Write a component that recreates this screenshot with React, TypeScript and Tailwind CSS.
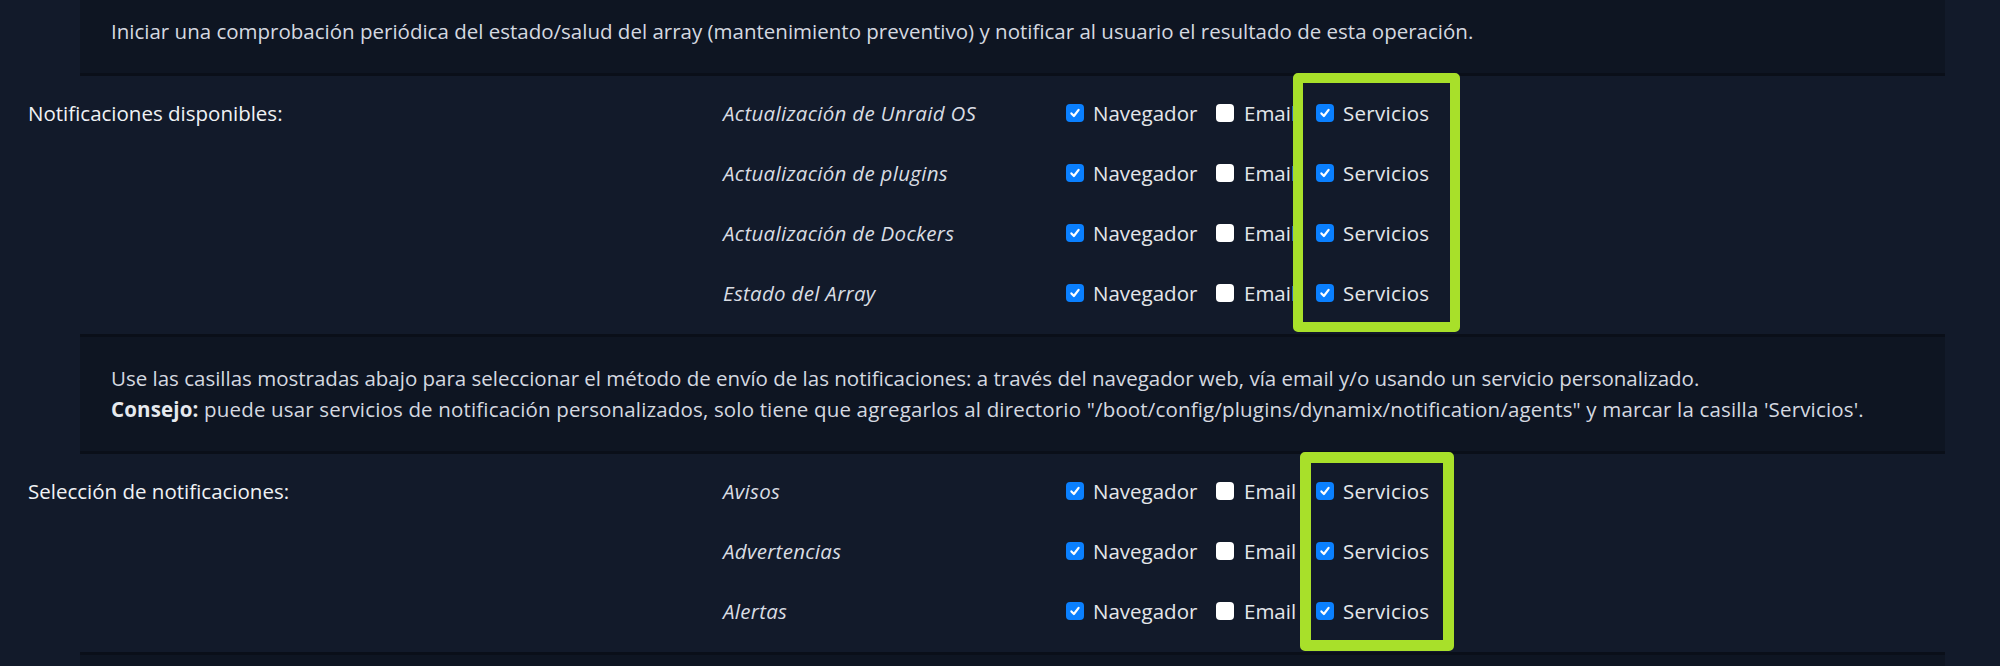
import React from "react";

const AVAILABLE = [
  "Actualización de Unraid OS",
  "Actualización de plugins",
  "Actualización de Dockers",
  "Estado del Array",
];

const SELECTION = ["Avisos", "Advertencias", "Alertas"];

function Check({ checked = false }: { checked?: boolean }) {
  if (!checked) {
    return <span className="w-[18px] h-[18px] rounded-[4px] bg-white shrink-0" />;
  }
  return (
    <span className="w-[18px] h-[18px] rounded-[4px] bg-[#0a80ff] flex items-center justify-center shrink-0">
      <svg viewBox="0 0 12 12" className="w-[12px] h-[12px]">
        <path
          d="M2.4 6.4 L4.9 9 L9.6 2.8"
          stroke="white"
          strokeWidth="2.2"
          fill="none"
          strokeLinecap="round"
          strokeLinejoin="round"
        />
      </svg>
    </span>
  );
}

function Options() {
  return (
    <div className="flex items-center text-[#e4e7eb]">
      <label className="w-[150px] flex items-center gap-[9px]">
        <Check checked />
        Navegador
      </label>
      <label className="w-[100px] flex items-center gap-[10px]">
        <Check />
        Email
      </label>
      <label className="flex items-center gap-[9px] tracking-[0.3px]">
        <Check checked />
        Servicios
      </label>
    </div>
  );
}

function Panel({ children, className = "" }: { children?: React.ReactNode; className?: string }) {
  return (
    <div
      className={`ml-[80px] mr-[55px] bg-[#0e1522] border-b-[3px] border-[#0a0f19] pl-[31px] text-[#d5d9e0] leading-[31px] ${className}`}
    >
      {children}
    </div>
  );
}

// bloque de etiqueta + filas de casillas, el recuadro verde va encima
function Section({
  title,
  items,
  box,
}: {
  title: string;
  items: string[];
  box: string;
}) {
  return (
    <div className="relative flex pt-[7px] pb-[11px]">
      <div className="w-[723px] pl-[28px] h-[60px] flex items-center text-[#f0f2f5]">{title}</div>
      <div className="flex flex-col">
        {items.map((it) => (
          <div key={it} className="h-[60px] flex items-center">
            <span className="w-[343px] italic tracking-[0.3px] text-[#d9dde3]">{it}</span>
            <Options />
          </div>
        ))}
      </div>
      <div className={`absolute rounded-[5px] border-[#a8e02a] ${box}`} />
    </div>
  );
}

export default function App() {
  return (
    <div
      className="relative h-[666px] overflow-hidden bg-[#121a2a] text-[20.5px]"
      style={{ fontFamily: '"Open Sans", "Noto Sans", sans-serif' }}
    >
      <Panel className="pt-[16px] pb-[26px]">
        Iniciar una comprobación periódica del estado/salud del array (mantenimiento preventivo) y notificar al
        usuario el resultado de esta operación.
      </Panel>

      <Section
        title="Notificaciones disponibles:"
        items={AVAILABLE}
        box="top-[-3px] left-[1293px] w-[167px] h-[259px] border-[10px]"
      />

      <Panel className="border-t-[3px] py-[26px]">
        <p>
          Use las casillas mostradas abajo para seleccionar el método de envío de las notificaciones: a través del
          navegador web, vía email y/o usando un servicio personalizado.
        </p>
        <p className="tracking-[0.16px]">
          <b className="font-bold text-[#e6e9ee]">Consejo:</b> puede usar servicios de notificación personalizados,
          solo tiene que agregarlos al directorio "/boot/config/plugins/dynamix/notification/agents" y marcar la casilla
          'Servicios'.
        </p>
      </Panel>

      <Section
        title="Selección de notificaciones:"
        items={SELECTION}
        box="top-[-2px] left-[1300px] w-[154px] h-[199px] border-[11px]"
      />

      <Panel className="border-t-[3px] h-[40px]" />
    </div>
  );
}
